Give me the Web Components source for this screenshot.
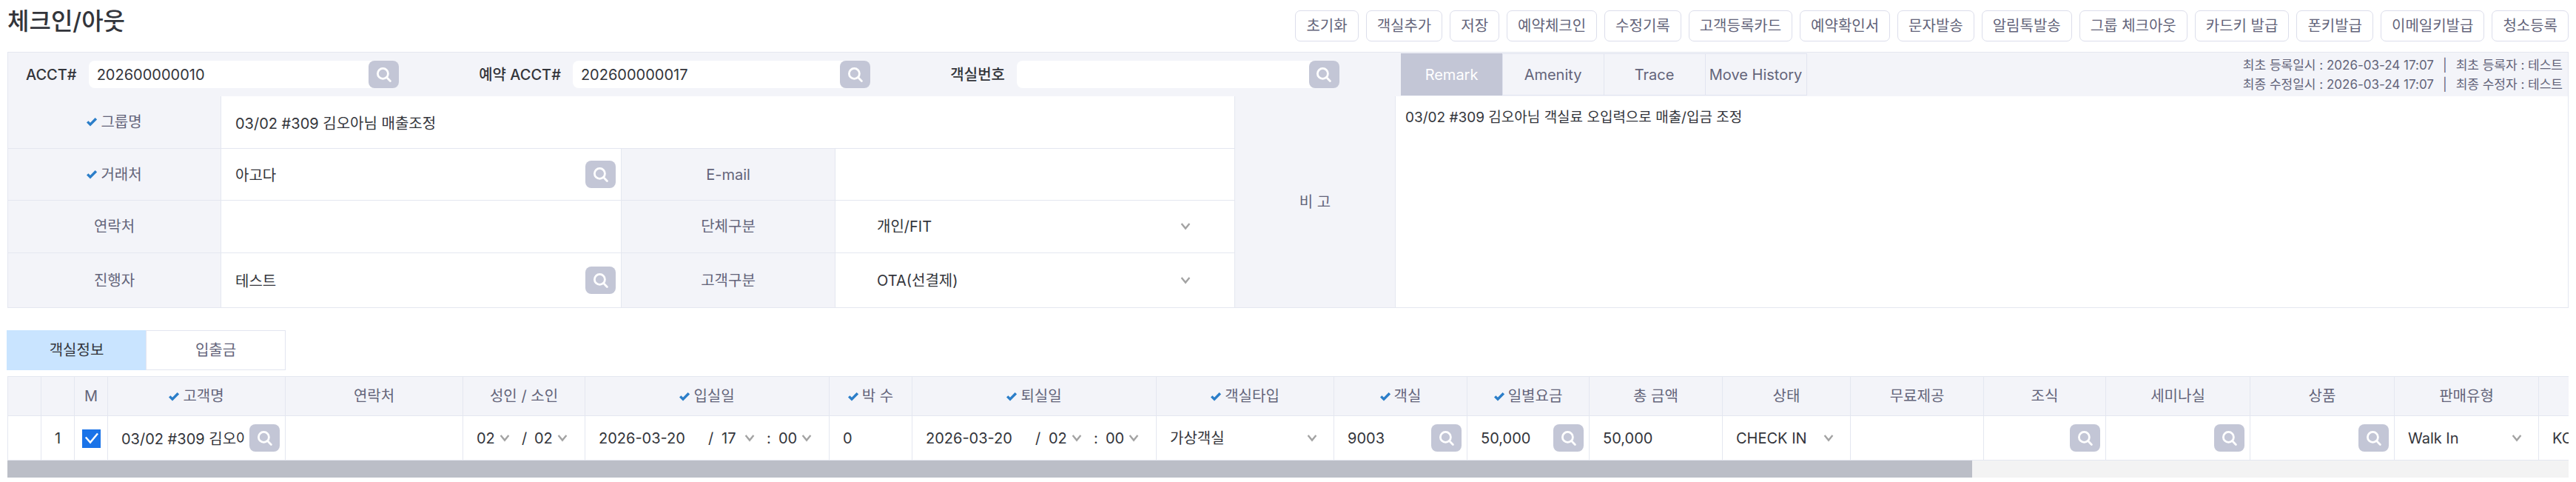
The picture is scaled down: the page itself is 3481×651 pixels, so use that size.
<!DOCTYPE html>
<html lang="ko">
<head>
<meta charset="utf-8">
<title>체크인/아웃</title>
<style>
  body {
    margin: 0;
    background: #fff;
    color: #33353b;
    font: 20px/24px Inter, "Noto Sans CJK KR", sans-serif;
    overflow: hidden;
  }
</style>
</head>
<body>
<checkin-page></checkin-page>

<script>
const CHECK_MARK = `<svg class="mark" width="14" height="12" viewBox="0 0 14 12" aria-hidden="true">
  <path d="M1.2 5.4 L5 9.2 L12.8 1.2" fill="none" stroke="#2b7ec9" stroke-width="3.4"/></svg>`;

/* Knop in de bovenste balk */
class ToolButton extends HTMLElement {
  constructor() {
    super();
    this.attachShadow({ mode: 'open' }).innerHTML = `
      <style>
        :host { display: block; }
        button {
          height: 42px; padding: 0 14px; box-sizing: border-box;
          background: #fff; color: #63647a; font: inherit; white-space: nowrap;
          border: 1px solid #dcdeeb; border-radius: 7px; cursor: pointer;
        }
      </style>
      <button type="button"><slot></slot></button>
    `;
  }
}
customElements.define('tool-button', ToolButton);

/* Tekstveld, optioneel met zoekknop en label */
class LookupField extends HTMLElement {
  constructor() {
    super();
    this.attachShadow({ mode: 'open' });
  }

  connectedCallback() {
    const label = this.getAttribute('label');
    const name = this.getAttribute('name') || label || '';
    const val = this.getAttribute('value') || '';
    const search = !this.hasAttribute('plain');

    this.shadowRoot.innerHTML = `
      <style>
        :host { display: flex; align-items: center; gap: 16px; min-width: 0; }
        label { font-weight: 500; white-space: nowrap; }
        .box {
          flex: 1; min-width: 0; height: 37px; display: flex; align-items: center;
          gap: 6px; background: #fff; border-radius: 8px;
        }
        input {
          flex: 1; min-width: 0; width: 0; height: 37px; box-sizing: border-box;
          padding: 0; margin-left: var(--indent, 11px); border: 0; outline: none;
          background: none; color: inherit; font: inherit;
        }
        button {
          width: 41px; height: 37px; padding: 0; border: 0; border-radius: 8px;
          background: #c3c6d6; display: grid; place-items: center; cursor: pointer;
        }
      </style>
      ${label ? `<label for="field">${label}</label>` : ''}
      <div class="box">
        <input type="text" id="field" value="${val}" ${label ? '' : `aria-label="${name}"`}>
        ${search ? `<button type="button" aria-label="${name} 검색">
          <svg width="24" height="24" viewBox="0 0 24 24" fill="none" stroke="#fff" stroke-width="2.8" stroke-linecap="round">
            <circle cx="10.4" cy="10.4" r="7"></circle>
            <path d="M15.8 15.8 L20.4 20.4"></path>
          </svg>
        </button>` : ''}
      </div>
    `;
  }
}
customElements.define('lookup-field', LookupField);

class DropDown extends HTMLElement {
  constructor() {
    super();
    this.attachShadow({ mode: 'open' });
  }

  connectedCallback() {
    this.shadowRoot.innerHTML = `
      <style>
        :host { display: grid; align-items: center; min-width: 0; }
        select, svg { grid-area: 1 / 1; }
        select {
          appearance: none; width: 100%; height: 37px; padding: 0; border: 0;
          outline: none; background: none; color: inherit; font: inherit;
        }
        svg { justify-self: end; pointer-events: none; }
      </style>
      <select aria-label="${this.getAttribute('name')}">
        <option>${this.getAttribute('value')}</option>
      </select>
      <svg width="14" height="10" viewBox="0 0 14 10" fill="none" stroke="#a3a3a3" stroke-width="2.4">
        <path d="M1.6 1 L7 7.6 L12.4 1"></path>
      </svg>
    `;
  }
}
customElements.define('drop-down', DropDown);

class TabBar extends HTMLElement {
  constructor() {
    super();
    this.attachShadow({ mode: 'open' });
  }

  connectedCallback() {
    const tabs = this.getAttribute('tabs').split(',');
    this.shadowRoot.innerHTML = `
      <style>
        :host { display: flex; }
        button {
          width: var(--tab-width); height: var(--tab-height); padding: 0; margin-left: -1px;
          box-sizing: border-box; border: 1px solid #e2e5f0; background: none;
          color: #63647a; font: inherit; white-space: nowrap; cursor: pointer;
        }
        button:first-child { margin-left: 0; }
        button.active { background: var(--tab-active); color: var(--tab-ink); border-color: var(--tab-active); }
      </style>
      ${tabs.map((t, i) => `<button type="button" class="${i === 0 ? 'active' : ''}">${t}</button>`).join('')}
    `;
    this.shadowRoot.querySelectorAll('button').forEach(btn => {
      btn.onclick = () => {
        this.shadowRoot.querySelector('.active').classList.remove('active');
        btn.classList.add('active');
      };
    });
  }
}
customElements.define('tab-bar', TabBar);

/* Paneel met reserveringsgegevens */
class GuestPanel extends HTMLElement {
  constructor() {
    super();
    this.attachShadow({ mode: 'open' }).innerHTML = `
      <style>
        :host { display: block; border: 1px solid #e4e7f0; }
        .top {
          display: grid; grid-template-columns: 1882fr 1576fr;
          height: 59px; background: #f3f4f9;
        }
        .search {
          display: grid; grid-template-columns: 504fr 529fr 525fr; align-items: center;
          gap: 108px; padding: 0 84px 0 24px;
        }
        .side { display: flex; align-items: center; justify-content: space-between; padding-right: 7px; }
        tab-bar { --tab-width: 138px; --tab-height: 57px; --tab-active: #c3c6d6; --tab-ink: #fff; }
        .meta { font-size: 17px; line-height: 26px; color: #63647a; }
        .meta div { display: flex; gap: 12px; }
        .form {
          display: grid; grid-template-columns: 288fr 541fr 289fr 540fr 217fr 1584fr;
          grid-template-rows: 71px 70px 71px 73px;
        }
        .form > * { min-width: 0; box-sizing: border-box; border-right: 1px solid #e4e7f0; }
        .th, .td { display: flex; align-items: center; border-bottom: 1px solid #e4e7f0; }
        .th { justify-content: center; gap: 5px; background: #f3f4f9; color: #63647a; }
        .td lookup-field { flex: 1; --indent: 19px; padding-right: 7px; }
        .td drop-down { flex: 1; margin: 0 59px 0 56px; }
        .wide { grid-column: 2 / 5; }
        .last { border-bottom: 0; }
        .note { grid-area: 1 / 5 / 5 / 6; border-bottom: 0; }
        textarea {
          grid-area: 1 / 6 / 5 / 7; width: 100%; padding: 17px 13px; resize: none;
          border: 0; outline: none; color: inherit; font: inherit; font-size: 19px;
        }
        .form > textarea { border-right: 0; }
      </style>
      <div class="top">
        <div class="search">
          <lookup-field label="ACCT#" value="202600000010"></lookup-field>
          <lookup-field label="예약 ACCT#" value="202600000017"></lookup-field>
          <lookup-field label="객실번호"></lookup-field>
        </div>
        <div class="side">
          <tab-bar tabs="Remark,Amenity,Trace,Move History"></tab-bar>
          <div class="meta">
            <div><span>최초 등록일시 : 2026-03-24 17:07</span><span>|</span><span>최초 등록자 : 테스트</span></div>
            <div><span>최종 수정일시 : 2026-03-24 17:07</span><span>|</span><span>최종 수정자 : 테스트</span></div>
          </div>
        </div>
      </div>
      <div class="form">
        <div class="th">${CHECK_MARK}그룹명</div>
        <div class="td wide"><lookup-field plain name="그룹명" value="03/02 #309 김오아님 매출조정"></lookup-field></div>
        <div class="th">${CHECK_MARK}거래처</div>
        <div class="td"><lookup-field name="거래처" value="아고다"></lookup-field></div>
        <div class="th">E-mail</div>
        <div class="td"><lookup-field plain name="E-mail"></lookup-field></div>
        <div class="th">연락처</div>
        <div class="td"><lookup-field plain name="연락처"></lookup-field></div>
        <div class="th">단체구분</div>
        <div class="td"><drop-down name="단체구분" value="개인/FIT"></drop-down></div>
        <div class="th last">진행자</div>
        <div class="td last"><lookup-field name="진행자" value="테스트"></lookup-field></div>
        <div class="th last">고객구분</div>
        <div class="td last"><drop-down name="고객구분" value="OTA(선결제)"></drop-down></div>
        <div class="th note">비 고</div>
        <textarea aria-label="비고">03/02 #309 김오아님 객실료 오입력으로 매출/입금 조정</textarea>
      </div>
    `;
  }
}
customElements.define('guest-panel', GuestPanel);

class StayTime extends HTMLElement {
  constructor() {
    super();
    this.attachShadow({ mode: 'open' });
  }

  connectedCallback() {
    const name = this.getAttribute('name');
    this.shadowRoot.innerHTML = `
      <style>
        :host { display: flex; align-items: center; }
        input {
          width: 148px; padding: 0; border: 0; outline: none;
          background: none; color: inherit; font: inherit;
        }
        drop-down { width: 45px; }
        span { width: 18px; }
        span + drop-down + span { width: 16px; padding-left: 16px; }
      </style>
      <input type="text" value="2026-03-20" aria-label="${name}">
      <span>/</span>
      <drop-down name="${name} 시" value="${this.getAttribute('hour')}"></drop-down>
      <span>:</span>
      <drop-down name="${name} 분" value="00"></drop-down>
    `;
  }
}
customElements.define('stay-time', StayTime);

/* Kamertabel: breder dan het venster, vandaar de schuifbalk */
class RoomTable extends HTMLElement {
  constructor() {
    super();
    this.attachShadow({ mode: 'open' });

    this.columns = [
      { w: 45, head: '', cell: '' },
      { w: 45, head: '', cell: '1', cls: 'mid' },
      { w: 45, head: 'M', cell: '<input type="checkbox" aria-label="M" checked>', cls: 'mid' },
      { w: 240, head: '고객명', req: true, cell: '<lookup-field name="고객명" value="03/02 #309 김오아님 매출조정"></lookup-field>' },
      { w: 240, head: '연락처', cell: '' },
      { w: 165, head: '성인 / 소인', cell: '<div class="pair"><drop-down name="성인" value="02"></drop-down><span>/</span><drop-down name="소인" value="02"></drop-down></div>' },
      { w: 330, head: '입실일', req: true, cell: '<stay-time name="입실일" hour="17"></stay-time>' },
      { w: 112, head: '박 수', req: true, cell: '<lookup-field plain name="박 수" value="0"></lookup-field>' },
      { w: 330, head: '퇴실일', req: true, cell: '<stay-time name="퇴실일" hour="02"></stay-time>' },
      { w: 240, head: '객실타입', req: true, cell: '<drop-down name="객실타입" value="가상객실"></drop-down>' },
      { w: 180, head: '객실', req: true, cell: '<lookup-field name="객실" value="9003"></lookup-field>' },
      { w: 165, head: '일별요금', req: true, cell: '<lookup-field name="일별요금" value="50,000"></lookup-field>' },
      { w: 180, head: '총 금액', cell: '<lookup-field plain name="총 금액" value="50,000"></lookup-field>' },
      { w: 173, head: '상태', cell: '<drop-down name="상태" value="CHECK IN"></drop-down>' },
      { w: 180, head: '무료제공', cell: '' },
      { w: 165, head: '조식', cell: '<lookup-field name="조식"></lookup-field>' },
      { w: 195, head: '세미나실', cell: '<lookup-field name="세미나실"></lookup-field>' },
      { w: 195, head: '상품', cell: '<lookup-field name="상품"></lookup-field>' },
      { w: 195, head: '판매유형', cell: '<drop-down name="판매유형" value="Walk In"></drop-down>' },
      { w: 240, head: '', cell: '<drop-down name="국적" value="KOR"></drop-down>' }
    ];
  }

  connectedCallback() {
    this.shadowRoot.innerHTML = `
      <style>
        :host { display: block; }
        .view { overflow: hidden; }
        table { border-collapse: collapse; table-layout: fixed; width: 0; }
        th, td { box-sizing: border-box; padding: 0; border: 1px solid #e4e7f0; }
        th { height: 53px; background: #f3f4f9; color: #63647a; font-weight: 400; white-space: nowrap; }
        td { height: 60px; }
        .mark { margin-right: 5px; }
        .mid { text-align: center; }
        lookup-field { --indent: 18px; margin-right: 7px; }
        td > drop-down { margin: 0 22px 0 18px; }
        .pair, stay-time { display: flex; align-items: center; margin-left: 18px; }
        .pair drop-down { width: 45px; }
        .pair span { width: 17px; padding-left: 16px; }
        input[type=checkbox] {
          appearance: none; width: 25px; height: 25px; margin: 0; vertical-align: middle;
          background: #1a73e8 url('data:image/svg+xml,<svg xmlns="http://www.w3.org/2000/svg" viewBox="0 0 25 25"><path d="M4.8 10.5 L11 17.6 L21 5.4" fill="none" stroke="white" stroke-width="2.4"/></svg>');
        }
        .track { height: 23px; background: #f3f3f3; }
        .thumb { width: 76.7%; height: 100%; background: #bbbec7; }
      </style>
      <div class="view">
        <table>
          <colgroup>${this.columns.map(c => `<col style="width:${c.w}px">`).join('')}</colgroup>
          <thead><tr>${this.columns.map(c => `<th>${c.req ? CHECK_MARK : ''}${c.head}</th>`).join('')}</tr></thead>
          <tbody><tr>${this.columns.map(c => `<td class="${c.cls || ''}">${c.cell}</td>`).join('')}</tr></tbody>
        </table>
      </div>
      <div class="track"><div class="thumb"></div></div>
    `;
  }
}
customElements.define('room-table', RoomTable);

class CheckinPage extends HTMLElement {
  constructor() {
    super();
    this.attachShadow({ mode: 'open' });
    this.tools = ['초기화', '객실추가', '저장', '예약체크인', '수정기록', '고객등록카드', '예약확인서',
      '문자발송', '알림톡발송', '그룹 체크아웃', '카드키 발급', '폰키발급', '이메일키발급', '청소등록'];
  }

  connectedCallback() {
    this.shadowRoot.innerHTML = `
      <style>
        :host { display: block; padding: 0 10px; }
        header { display: flex; align-items: center; justify-content: space-between; height: 70px; }
        h1 { margin: 0; padding-bottom: 12px; font-size: 32px; line-height: 40px; font-weight: 500; }
        nav { display: flex; gap: 10px; }
        .tabs {
          margin: 30px 0 8px; --tab-width: 189px; --tab-height: 54px;
          --tab-active: #c9e4ff; --tab-ink: #33353b;
        }
      </style>
      <header>
        <h1>체크인/아웃</h1>
        <nav>${this.tools.map(t => `<tool-button>${t}</tool-button>`).join('')}</nav>
      </header>
      <guest-panel></guest-panel>
      <tab-bar class="tabs" tabs="객실정보,입출금"></tab-bar>
      <room-table></room-table>
    `;
  }
}
customElements.define('checkin-page', CheckinPage);
</script>
</body>
</html>
